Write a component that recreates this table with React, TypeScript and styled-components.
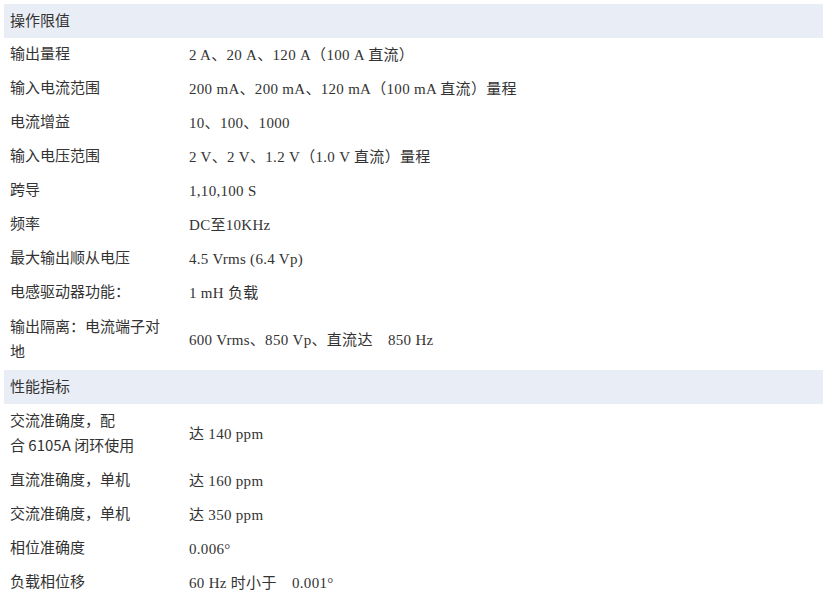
import React from "react";
import styled, { createGlobalStyle } from "styled-components";

const Global = createGlobalStyle`
  html, body { margin: 0; padding: 0; background: #fff; }
  body { font-family: "Noto Sans CJK SC", "Noto Sans", sans-serif; color: #333; }
`;

const Page = styled.div`
  padding: 4px 4px 0 4px;
  width: 819px;
`;

const Table = styled.div`
  display: flex;
  flex-direction: column;
`;

const SectionHeader = styled.div`
  background: #e9edf5;
  height: 34px;
  display: flex;
  align-items: center;
  padding: 0 6px 2px;
  box-sizing: border-box;
  font-size: 15px;
  line-height: 20px;
  color: #333;
`;

const Row = styled.div`
  display: grid;
  grid-template-columns: 179px 1fr;
  align-items: center;
  padding: 5px 0;
  height: auto;
`;

const Label = styled.div<{ $lh?: number }>`
  padding: 0 6px 2px;
  margin-top: -2px;
  font-family: "Noto Sans CJK SC", sans-serif;
  font-size: 15px;
  line-height: ${(p) => p.$lh ?? 24}px;
  color: #333;
`;

const Value = styled.div`
  padding: 0 6px;
  font-family: "Liberation Serif", "Noto Sans CJK SC", serif;
  font-size: 15px;
  letter-spacing: 0.3px;
  line-height: 24px;
  height: 24px;
  color: #333;
  white-space: pre;
`;

type Item = { label: React.ReactNode; value: string; two?: boolean };

const ops: Item[] = [
  { label: "输出量程", value: "2 A、20 A、120 A（100 A 直流）" },
  { label: "输入电流范围", value: "200 mA、200 mA、120 mA（100 mA 直流）量程" },
  { label: "电流增益", value: "10、100、1000" },
  { label: "输入电压范围", value: "2 V、2 V、1.2 V（1.0 V 直流）量程" },
  { label: "跨导", value: "1,10,100 S" },
  { label: "频率", value: "DC至10KHz" },
  { label: "最大输出顺从电压", value: "4.5 Vrms (6.4 Vp)" },
  { label: "电感驱动器功能：", value: "1 mH 负载" },
  {
    label: (
      <>
        输出隔离：电流端子对
        <br />地
      </>
    ),
    value: "600 Vrms、850 Vp、直流达　850 Hz",
    two: true,
  },
];

const perf: Item[] = [
  {
    label: (
      <>
        交流准确度，配
        <br />合 6105A 闭环使用
      </>
    ),
    value: "达 140 ppm",
    two: true,
  },
  { label: "直流准确度，单机", value: "达 160 ppm" },
  { label: "交流准确度，单机", value: "达 350 ppm" },
  { label: "相位准确度", value: "0.006°" },
  { label: "负载相位移", value: "60 Hz 时小于　0.001°" },
];

const Rows = ({ items }: { items: Item[] }) => (
  <>
    {items.map((it, i) => (
      <Row key={i}>
        <Label $lh={it.two ? 25 : 24}>{it.label}</Label>
        <Value>{it.value}</Value>
      </Row>
    ))}
  </>
);

export default function App() {
  return (
    <Page>
      <Global />
      <Table>
        <SectionHeader>操作限值</SectionHeader>
        <Rows items={ops} />
        <SectionHeader>性能指标</SectionHeader>
        <Rows items={perf} />
      </Table>
    </Page>
  );
}
